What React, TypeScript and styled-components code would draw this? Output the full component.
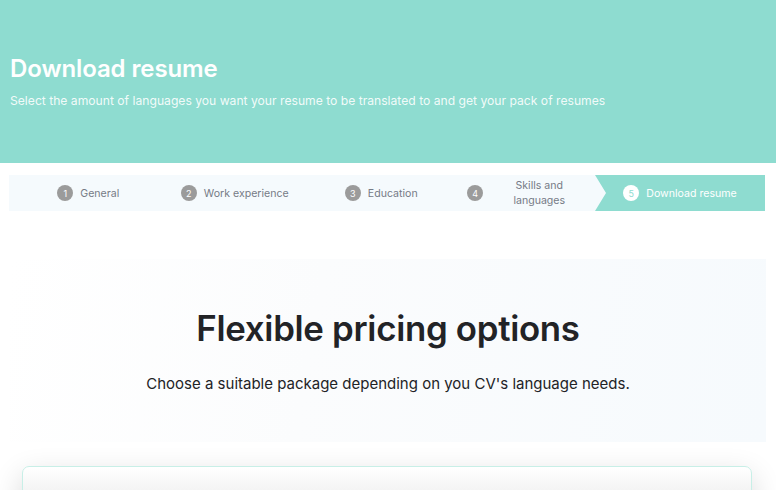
import React from "react";
import styled, { createGlobalStyle } from "styled-components";

const GlobalStyle = createGlobalStyle`
  body {
    margin: 0;
    background: #ffffff;
    font-family: Inter, "Noto Sans", "Liberation Sans", sans-serif;
    overflow: hidden;
  }
`;

const Page = styled.div`
  width: 776px;
  height: 490px;
  overflow: hidden;
`;

const Hero = styled.header`
  height: 163px;
  background: #8edcd0;
  padding: 54px 10px 0;
  box-sizing: border-box;
  color: #ffffff;
`;

const Title = styled.h1`
  margin: 0;
  font-size: 24px;
  font-weight: 600;
  line-height: 30px;
  letter-spacing: -0.1px;
`;

const Subtitle = styled.p`
  margin: 9px 0 0;
  font-size: 12.15px;
  line-height: 16px;
  color: rgba(255, 255, 255, 0.9);
`;

const Stepper = styled.nav`
  margin: 12px 11px 0 9px;
  height: 36px;
  display: grid;
  grid-template-columns: repeat(4, 1fr) 170px;
  background: #f5fafd;
`;

const Step = styled.div<{ $active?: boolean }>`
  display: flex;
  align-items: center;
  justify-content: center;
  gap: 7px;
  padding-left: ${(p) => (p.$active ? "0" : "12px")};
  background: ${(p) => (p.$active ? "#8edcd0" : "transparent")};
  clip-path: ${(p) =>
    p.$active
      ? "polygon(0 0, 100% 0, 100% 100%, 0 100%, 11px 50%)"
      : "none"};
  color: ${(p) => (p.$active ? "#ffffff" : "#767b86")};
  font-size: 10.6px;
`;

const Badge = styled.span<{ $active?: boolean }>`
  width: 16px;
  height: 16px;
  border-radius: 50%;
  flex-shrink: 0;
  display: flex;
  align-items: center;
  justify-content: center;
  font-size: 9px;
  background: ${(p) => (p.$active ? "#ffffff" : "#9b9b9b")};
  color: ${(p) => (p.$active ? "#8edcd0" : "#ffffff")};
`;

const Label = styled.span<{ $width?: number }>`
  line-height: 15px;
  text-align: center;
  width: ${(p) => (p.$width ? `${p.$width}px` : "auto")};
`;

const Pricing = styled.section`
  margin: 48px 10px 0 10px;
  height: 183px;
  display: flex;
  flex-direction: column;
  align-items: center;
  justify-content: center;
  background: linear-gradient(100deg, #ffffff 0%, #fbfcfd 40%, #f6fafd 100%);
`;

const PricingTitle = styled.h2`
  margin: 0;
  font-size: 34.8px;
  font-weight: 600;
  line-height: 40px;
  color: #222326;
  letter-spacing: -0.3px;
`;

const PricingText = styled.p`
  margin: 26px 0 0;
  font-size: 15px;
  line-height: 20px;
  color: #222326;
`;

const Card = styled.div`
  margin: 24px 24px 0 22px;
  height: 80px;
  border: 1px solid #c8efe7;
  border-radius: 7px;
  background: linear-gradient(180deg, #ffffff 0%, #eeeeee 45%, #e3e3e3 100%);
  box-shadow: 0 10px 30px rgba(0, 0, 0, 0.16);
`;

const steps = [
  { n: 1, label: "General" },
  { n: 2, label: "Work experience" },
  { n: 3, label: "Education" },
  { n: 4, label: "Skills and languages", width: 98 },
  { n: 5, label: "Download resume", active: true },
];

const App = () => {
  return (
    <Page>
      <GlobalStyle />
      <Hero>
        <Title>Download resume</Title>
        <Subtitle>
          Select the amount of languages you want your resume to be translated to and get your pack of resumes
        </Subtitle>
      </Hero>

      <Stepper>
        {steps.map((s) => (
          <Step key={s.n} $active={s.active}>
            <Badge $active={s.active}>{s.n}</Badge>
            <Label $width={s.width}>{s.label}</Label>
          </Step>
        ))}
      </Stepper>

      <Pricing>
        <PricingTitle>Flexible pricing options</PricingTitle>
        <PricingText>Choose a suitable package depending on you CV's language needs.</PricingText>
      </Pricing>

      <Card />
    </Page>
  );
};

export default App;
